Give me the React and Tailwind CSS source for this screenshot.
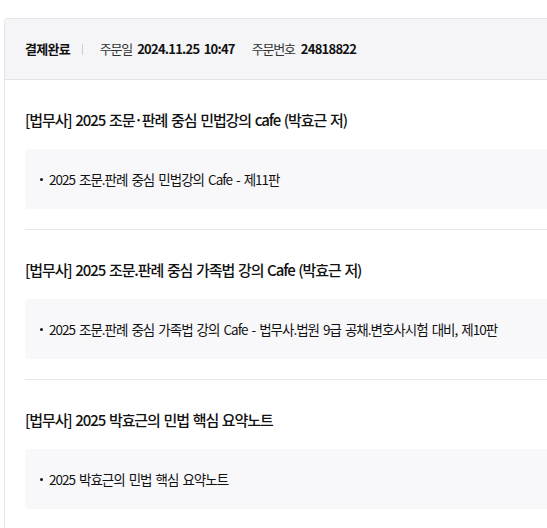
import React from 'react';

const orders = [
  {
    title: '[법무사] 2025 조문·판례 중심 민법강의 cafe (박효근 저)',
    items: ['2025 조문.판례 중심 민법강의 Cafe - 제11판'],
  },
  {
    title: '[법무사] 2025 조문.판례 중심 가족법 강의 Cafe (박효근 저)',
    items: ['2025 조문.판례 중심 가족법 강의 Cafe - 법무사.법원 9급 공채.변호사시험 대비, 제10판'],
  },
  {
    title: '[법무사] 2025 박효근의 민법 핵심 요약노트',
    items: ['2025 박효근의 민법 핵심 요약노트'],
  },
];

export default function App() {
  return (
    <div
      className="min-h-screen bg-white pt-[18px] pl-[4px] text-[#111]"
      style={{ fontFamily: '"Noto Sans CJK KR", "Noto Sans", sans-serif' }}
    >
      <div className="border-l border-t border-[#e5e5e8] rounded-tl-[4px] -mr-[20px]">
        {/* Header */}
        <div className="h-[61px] bg-[#f5f5f7] border-b border-[#e2e2e6] flex items-center pl-[20px] text-[13px] tracking-[-0.75px] [word-spacing:2px]">
          <span className="font-bold">결제완료</span>
          <span className="ml-[12px] mr-[17px] w-px h-[11px] bg-[#c9ccd4]" />
          <span className="text-[#333] tracking-[-1.2px]">주문일</span>
          <span className="ml-[5px] font-bold">2024.11.25 10:47</span>
          <span className="ml-[17px] text-[#333] tracking-[-1.2px]">주문번호</span>
          <span className="ml-[6px] font-bold">24818822</span>
        </div>

        {/* Products */}
        <div className="pl-[20px]">
          {orders.map((o, i) => (
            <div
              key={i}
              className={`pt-[30px] pb-[20px] ${i < orders.length - 1 ? 'border-b border-[#e8e8ea]' : ''}`}
            >
              <h3 className="text-[15px] font-medium leading-[20px] tracking-[-1.1px] [word-spacing:1.5px]">{o.title}</h3>
              <div className="mt-[19px] h-[60px] bg-[#f8f8fa] rounded-l-[4px] flex items-center pl-[15px]">
                {o.items.map((it, j) => (
                  <div key={j} className="flex items-center text-[13.5px] tracking-[-1px] [word-spacing:2px]">
                    <span className="w-[3px] h-[3px] rounded-full bg-[#111] mr-[6px]" />
                    {it}
                  </div>
                ))}
              </div>
            </div>
          ))}
        </div>
      </div>
    </div>
  );
}
